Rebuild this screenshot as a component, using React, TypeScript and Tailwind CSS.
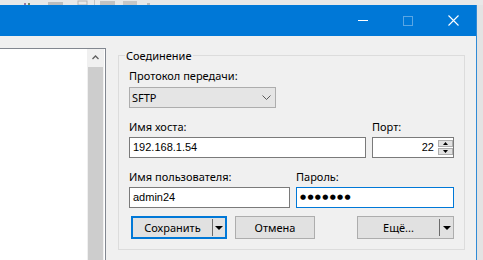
import React from "react";

function Chevron() {
  return (
    <svg width="9" height="6" viewBox="0 0 9 6" className="block">
      <polyline points="0.5,0.5 4.5,4.5 8.5,0.5" fill="none" stroke="#5a5a5a" strokeWidth="1" />
    </svg>
  );
}

function DownTri({ w = 9, h = 5 }: { w?: number; h?: number }) {
  return (
    <svg width={w} height={h} viewBox={`0 0 ${w} ${h}`} className="block">
      <polygon points={`0,0 ${w},0 ${w / 2},${h}`} fill="#000" />
    </svg>
  );
}

function Field({ children, className = "" }: { children?: React.ReactNode; className?: string }) {
  return (
    <div
      className={
        "h-[21px] bg-white border border-[#7a7a7a] flex items-center pl-[3px] font-['Liberation_Sans',sans-serif] text-[11px] leading-none " +
        className
      }
    >
      {children}
    </div>
  );
}

export default function App() {
  return (
    <div className="w-[483px] h-[260px] overflow-hidden bg-[#e3e3e3] flex flex-col font-['Noto_Sans',sans-serif] text-[11px] leading-[16px] text-black">
      {/* background app toolbar strip */}
      <div className="h-[5px] shrink-0 bg-[#e8e8e8]">
        <svg width="483" height="5" className="block">
          <rect x="24" y="3" width="2" height="2" fill="#9a7aa0" />
          <rect x="28" y="3" width="2" height="2" fill="#7a8a60" />
          <rect x="48" y="2" width="15" height="3" fill="#bdbdbd" />
          <rect x="78" y="1" width="9" height="4" fill="none" stroke="#b5b5b5" />
          <rect x="94" y="0" width="1" height="5" fill="#c4c4c4" />
          <rect x="100" y="1" width="15" height="4" fill="#c2c2c2" />
          <rect x="123" y="1" width="14" height="4" fill="#c6c6c6" />
          <rect x="147" y="3" width="3" height="2" fill="#bbbbbb" />
        </svg>
      </div>

      <div className="flex flex-1 min-h-0">
        {/* window */}
        <div className="w-[477px] flex flex-col border-r border-[#2f8ad6]">
          {/* title bar */}
          <div className="h-[31px] shrink-0 bg-[#0078d7] flex justify-end">
            <div className="w-[46px] flex items-center justify-center pl-[4px]">
              <div className="w-[10px] h-[1px] bg-white" />
            </div>
            <div className="w-[46px] flex items-center justify-center pl-[2px]">
              <div className="w-[10px] h-[10px] border border-[#5aa6e4]" />
            </div>
            <div className="w-[46px] flex items-center justify-center">
              <svg width="11" height="11" viewBox="0 0 11 11" className="block">
                <path d="M0.5 0.5 L10.5 10.5 M10.5 0.5 L0.5 10.5" stroke="#fff" strokeWidth="1.1" />
              </svg>
            </div>
          </div>

          {/* content */}
          <div className="flex-1 bg-[#f0f0f0] flex pt-[12px]">
            {/* left list */}
            <div className="w-[106px] bg-white border-t border-r border-[#828790] flex justify-end">
              <div className="w-[17px] mr-[1px] bg-[#f0f0f0] flex flex-col">
                <div className="h-[17px] flex items-center justify-center">
                  <svg width="7" height="5" viewBox="0 0 7 5" className="block">
                    <polyline points="0.5,4 3.5,1 6.5,4" fill="none" stroke="#606060" strokeWidth="1.3" />
                  </svg>
                </div>
                <div className="flex-1 mt-[1px] mx-[1px] bg-[#cdcdcd]" />
              </div>
            </div>

            {/* group box */}
            <div className="relative ml-[12px] mt-[7px] self-start w-[347px] border border-[#dcdcdc] px-[10px] pt-[12px] pb-[10px]">
              <span className="absolute top-[-8px] left-[6px] px-[1px] bg-[#f0f0f0]">Соединение</span>

              <div>Протокол передачи:</div>
              <div className="mt-[3px] w-[147px] h-[21px] bg-[#e5e5e5] border border-[#adadad] flex items-center justify-between pl-[2px] pr-[4px]">
                <span>SFTP</span>
                <Chevron />
              </div>

              <div className="mt-[11px] flex gap-[6px]">
                <div className="w-[237px]">
                  <div>Имя хоста:</div>
                  <Field className="mt-[2px]">192.168.1.54</Field>
                </div>
                <div className="w-[82px]">
                  <div>Порт:</div>
                  <div className="mt-[2px] h-[21px] bg-white border border-[#7a7a7a] flex font-['Liberation_Sans',sans-serif] text-[11px] leading-none">
                    <div className="flex-1 flex items-center justify-end pr-[4px]">22</div>
                    <div className="w-[15px] pt-[2px] flex flex-col gap-[1px]">
                      <div className="h-[7px] bg-[#e1e1e1] border border-[#adadad] flex items-center justify-center">
                        <svg width="5" height="3" viewBox="0 0 5 3" className="block">
                          <polygon points="0,3 5,3 2.5,0" fill="#000" />
                        </svg>
                      </div>
                      <div className="h-[7px] bg-[#e1e1e1] border border-[#adadad] flex items-center justify-center">
                        <svg width="5" height="3" viewBox="0 0 5 3" className="block">
                          <polygon points="0,0 5,0 2.5,3" fill="#000" />
                        </svg>
                      </div>
                    </div>
                  </div>
                </div>
              </div>

              <div className="mt-[11px] flex gap-[6px]">
                <div className="w-[161px]">
                  <div>Имя пользователя:</div>
                  <Field className="mt-[2px]">admin24</Field>
                </div>
                <div className="w-[158px]">
                  <div>Пароль:</div>
                  <div className="mt-[2px] h-[21px] bg-white border border-[#0078d7] flex items-center pl-[3px] font-['DejaVu_Sans',sans-serif] text-[7px] leading-none tracking-[1.3px]">
                    ●●●●●●●
                  </div>
                </div>
              </div>

              <div className="mt-[8px] flex">
                <div className="ml-[2px] w-[96px] h-[23px] bg-[#e1e1e1] border-2 border-[#0078d7] flex items-center">
                  <div className="flex-1 text-center">Сохранить</div>
                  <div className="w-[1px] h-[17px] bg-[#6b6b6b]" />
                  <div className="w-[12px] flex justify-center">
                    <DownTri w={8} h={4} />
                  </div>
                </div>
                <div className="ml-[8px] w-[80px] h-[23px] bg-[#e1e1e1] border border-[#adadad] flex items-center justify-center">
                  Отмена
                </div>
                <div className="ml-auto w-[97px] h-[23px] bg-[#e1e1e1] border border-[#adadad] flex items-center">
                  <div className="flex-1 text-center">Ещё...</div>
                  <div className="w-[1px] h-[17px] bg-[#6b6b6b]" />
                  <div className="w-[13px] flex justify-center">
                    <DownTri w={8} h={4} />
                  </div>
                </div>
              </div>
            </div>
          </div>
        </div>
        <div className="flex-1" />
      </div>
    </div>
  );
}
